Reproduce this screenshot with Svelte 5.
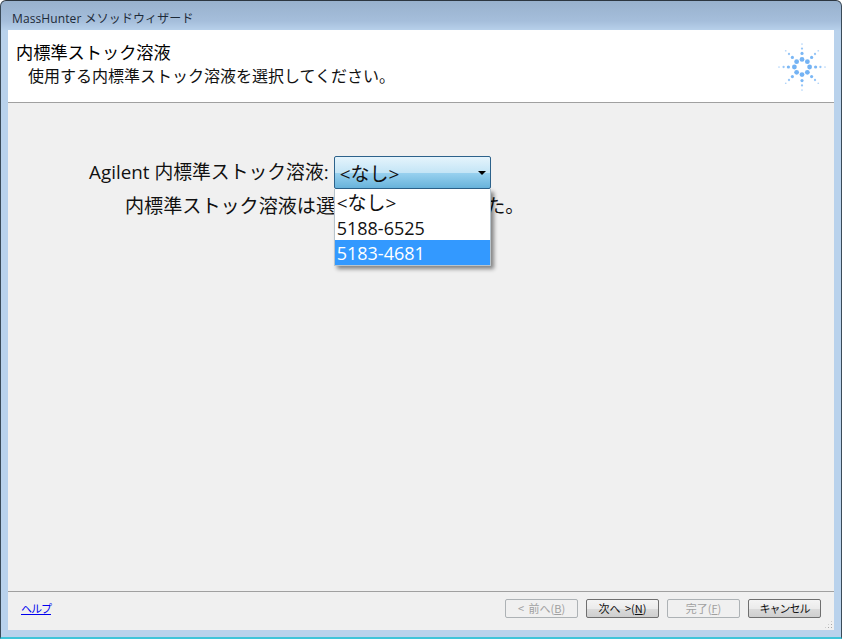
<script lang="ts">
    const options = ["<なし>", "5188-6525", "5183-4681"];
    const selected = 2;

    // Agilent spark: 8 spokes, dots shrink and fade toward the tip
    const rings = [
        { d: 7.6, r: 2.4, o: 1 },
        { d: 13.6, r: 1.6, o: 0.95 },
        { d: 18.4, r: 1.15, o: 0.75 },
        { d: 23, r: 0.85, o: 0.55 },
    ];
    const dots: { x: number; y: number; r: number; o: number }[] = [];
    for (let i = 0; i < 8; i++) {
        const a = (i * Math.PI) / 4;
        for (const { d, r, o } of rings) {
            dots.push({ x: 24 + d * Math.sin(a), y: 24 - d * Math.cos(a), r, o });
        }
    }
</script>

<div class="window">
    <div class="titlebar">MassHunter メソッドウィザード</div>
    <div class="client">
        <header>
            <div class="heading">
                <h1>内標準ストック溶液</h1>
                <p>使用する内標準ストック溶液を選択してください。</p>
            </div>
            <svg class="spark" width="48" height="48" viewBox="0 0 48 48">
                {#each dots as d}
                    <circle cx={d.x} cy={d.y} r={d.r} fill="#74b3f4" fill-opacity={d.o} />
                {/each}
            </svg>
        </header>

        <main>
            <div class="row">
                <span class="label">Agilent 内標準ストック溶液:</span>
                <div class="combo">
                    <div class="combo-box">
                        <span>{options[0]}</span>
                        <span class="arrow"></span>
                    </div>
                    <ul class="dropdown">
                        {#each options as opt, i}
                            <li class:selected={i === selected} class:none={i === 0}>{opt}</li>
                        {/each}
                    </ul>
                </div>
            </div>
            <p class="status">内標準ストック溶液は選択されませんでした。</p>
        </main>

        <footer>
            <a href="#help">ヘルプ</a>
            <div class="buttons">
                <button disabled>&lt; 前へ(<u>B</u>)</button>
                <button class="next">次へ &gt;(<u>N</u>)</button>
                <button disabled>完了(<u>F</u>)</button>
                <button class="cancel">キャンセル</button>
            </div>
            <span class="grip"></span>
        </footer>
    </div>
</div>

<style>
    :global(body) {
        margin: 0;
        background: #fff;
    }

    .window {
        width: 842px;
        height: 639px;
        box-sizing: border-box;
        padding: 0 7px 7px 7px;
        display: flex;
        flex-direction: column;
        border: 1px solid #3a4a58;
        border-top-color: #2c3640;
        border-bottom: 2px solid #3fc4d8;
        border-radius: 6px 6px 0 0;
        background: linear-gradient(to bottom, #98b1cd 0, #a5bedb 20px, #b9d2ec 30px, #b9d2ec 100%);
        font-family: "Noto Sans CJK JP", "Noto Sans", sans-serif;
        color: #111;
    }

    .titlebar {
        height: 29px;
        padding: 9px 4px 0 4px;
        box-sizing: border-box;
        font-size: 12px;
        line-height: 17px;
        letter-spacing: 0.1px;
        color: #1d2a38;
        font-family: "Open Sans", "Noto Sans CJK JP", sans-serif;
    }

    .client {
        flex: 1;
        display: flex;
        flex-direction: column;
        background: #f0f0f0;
        min-height: 0;
    }

    header {
        height: 73px;
        box-sizing: border-box;
        background: #fff;
        border-bottom: 1px solid #a0a0a0;
        display: flex;
        justify-content: space-between;
        padding: 10px 8px 0 8px;
    }

    h1 {
        margin: 0;
        font-size: 17.2px;
        line-height: 24px;
        font-weight: 400;
        color: #000;
    }

    .heading p {
        margin: 1px 0 0 12px;
        font-size: 16px;
        line-height: 20px;
    }

    .spark {
        margin-top: 3px;
    }

    main {
        flex: 1;
        padding: 53px 0 0 81px;
    }

    .row {
        display: flex;
        align-items: center;
        gap: 5px;
        height: 33px;
    }

    .label {
        font-family: "Open Sans", "Noto Sans CJK JP", sans-serif;
        font-size: 18.8px;
        line-height: 33px;
        letter-spacing: 0.03px;
    }

    .combo {
        position: relative;
        width: 157px;
    }

    .combo-box {
        height: 33px;
        box-sizing: border-box;
        border: 1px solid #2c628b;
        border-radius: 2px;
        padding: 0 4px 0 5px;
        display: flex;
        align-items: center;
        justify-content: space-between;
        background: linear-gradient(to bottom, #e5f4fc 0, #c4e5f6 50%, #98d1ef 52%, #68b3db 100%);
        font-family: "Open Sans", "Noto Sans CJK JP", sans-serif;
        font-size: 19px;
        line-height: 31px;
    }

    .combo-box span:first-child {
        padding-top: 3px;
    }

    .arrow {
        width: 0;
        height: 0;
        border-left: 4px solid transparent;
        border-right: 4px solid transparent;
        border-top: 4px solid #000;
    }

    .dropdown {
        position: absolute;
        top: 33px;
        left: 0;
        width: 157px;
        box-sizing: border-box;
        margin: 0;
        padding: 1px 0 0 0;
        list-style: none;
        background: #fff;
        border: 1px solid #b8c4cc;
        border-top: 0;
        box-shadow: 3px 3px 4px rgba(0, 0, 0, 0.45);
        font-family: "Open Sans", "Noto Sans CJK JP", sans-serif;
        font-size: 18px;
        z-index: 2;
    }

    .dropdown li {
        height: 25px;
        line-height: 27px;
        padding-left: 2px;
        color: #111;
    }

    .dropdown li.none {
        font-size: 19px;
    }

    .dropdown li.selected {
        background: #3399ff;
        color: #fff;
    }

    .status {
        margin: 1px 0 0 36px;
        font-size: 19.1px;
        line-height: 30px;
    }

    footer {
        position: relative;
        height: 39px;
        box-sizing: border-box;
        border-top: 1px solid #a0a0a0;
        display: flex;
        align-items: center;
        justify-content: space-between;
        padding: 0 13px 6px 13px;
    }

    footer a {
        font-size: 11px;
        letter-spacing: -1px;
        color: #0000ee;
        text-decoration: underline;
    }

    .buttons {
        display: flex;
        gap: 8px;
    }

    button {
        width: 73px;
        height: 19px;
        padding: 0;
        box-sizing: border-box;
        border: 1px solid #6f6f6f;
        border-radius: 2px;
        background: linear-gradient(to bottom, #f4f4f4 0, #ebebeb 50%, #dbdbdb 52%, #cfcfcf 100%);
        font-family: "Noto Sans CJK JP", sans-serif;
        font-size: 11px;
        line-height: 16px;
        word-spacing: 2px;
        color: #111;
    }

    button:disabled {
        background: #f0f0f0;
        border-color: #adb2b5;
        color: #a0a0a0;
    }

    .cancel {
        letter-spacing: -1px;
    }

    .grip {
        position: absolute;
        right: 1px;
        bottom: 1px;
        width: 9px;
        height: 9px;
        background-image: radial-gradient(circle, #a8a8a8 1px, transparent 1px);
        background-size: 3px 3px;
        clip-path: polygon(100% 0, 100% 100%, 0 100%);
    }
</style>
